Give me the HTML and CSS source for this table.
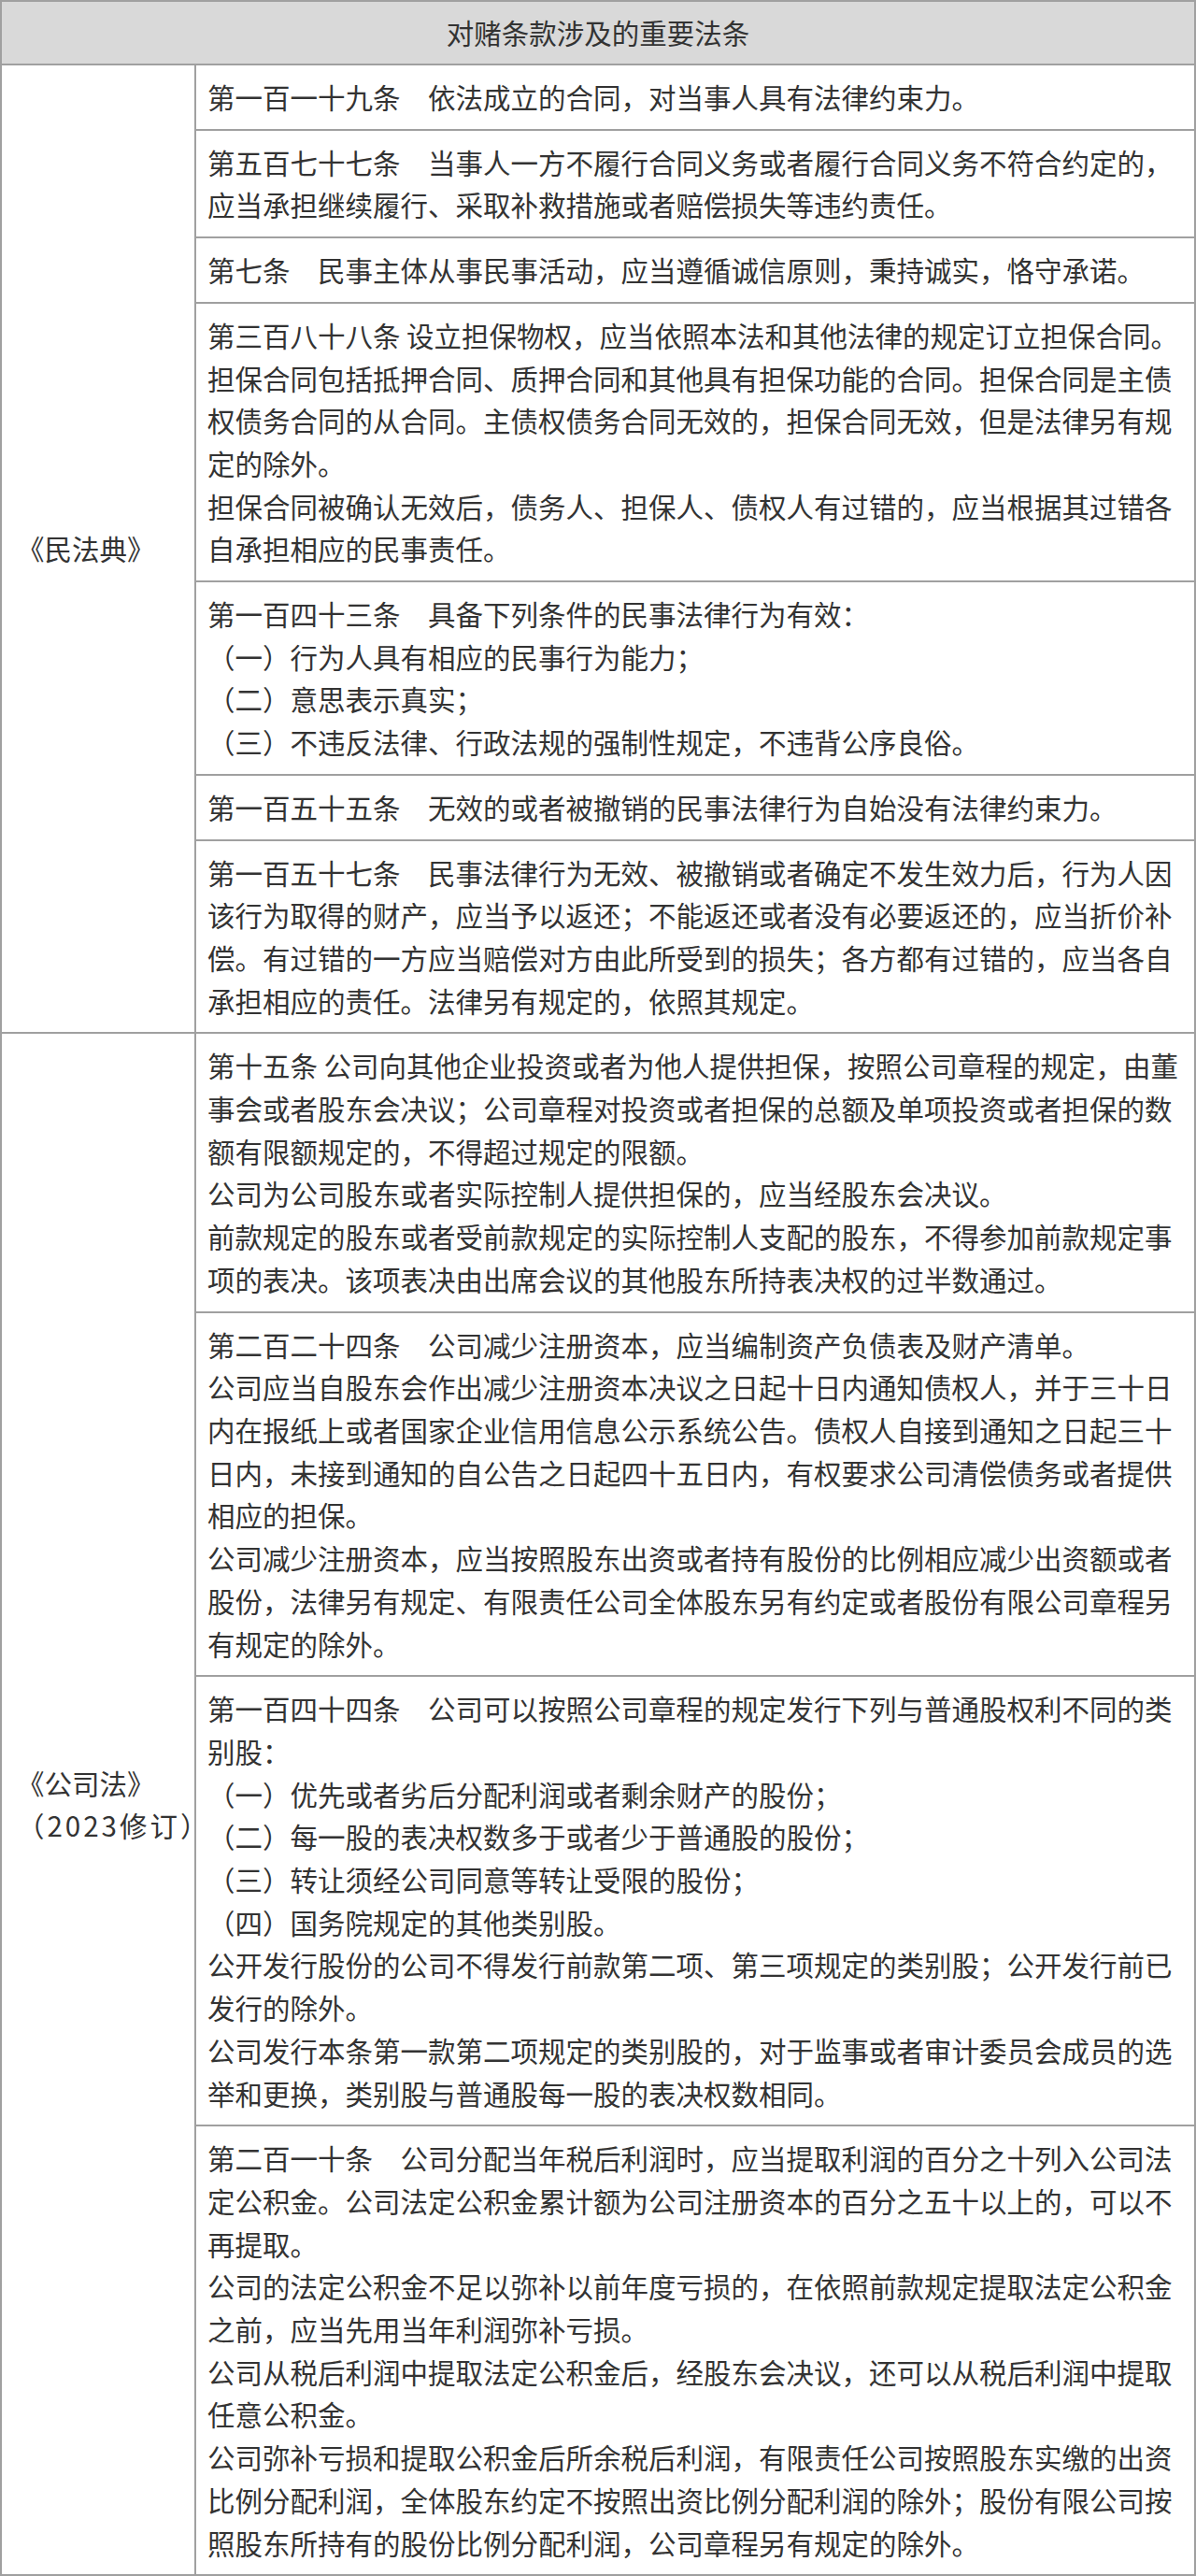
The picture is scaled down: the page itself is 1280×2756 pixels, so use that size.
FILE: index.html
```html
<!DOCTYPE html>
<html lang="zh-CN">
<head>
<meta charset="utf-8">
<title>对赌条款涉及的重要法条</title>
<link rel="stylesheet" href="styles.css">
</head>
<body>
<table class="law-table">
  <colgroup>
    <col class="col-law">
    <col class="col-text">
  </colgroup>
  <thead>
    <tr><th colspan="2" class="head">对赌条款涉及的重要法条</th></tr>
  </thead>
  <tbody>
    <tr>
      <td rowspan="7" class="law">《民法典》</td>
      <td class="text"><p>第一百一十九条　依法成立的合同，对当事人具有法律约束力。</p></td>
    </tr>
    <tr>
      <td class="text"><p>第五百七十七条　当事人一方不履行合同义务或者履行合同义务不符合约定的，应当承担继续履行、采取补救措施或者赔偿损失等违约责任。</p></td>
    </tr>
    <tr>
      <td class="text"><p>第七条　民事主体从事民事活动，应当遵循诚信原则，秉持诚实，恪守承诺。</p></td>
    </tr>
    <tr>
      <td class="text">
        <p>第三百八十八条 设立担保物权，应当依照本法和其他法律的规定订立担保合同。担保合同包括抵押合同、质押合同和其他具有担保功能的合同。担保合同是主债权债务合同的从合同。主债权债务合同无效的，担保合同无效，但是法律另有规定的除外。</p>
        <p>担保合同被确认无效后，债务人、担保人、债权人有过错的，应当根据其过错各自承担相应的民事责任。</p>
      </td>
    </tr>
    <tr>
      <td class="text">
        <p>第一百四十三条　具备下列条件的民事法律行为有效：</p>
        <p>（一）行为人具有相应的民事行为能力；</p>
        <p>（二）意思表示真实；</p>
        <p>（三）不违反法律、行政法规的强制性规定，不违背公序良俗。</p>
      </td>
    </tr>
    <tr>
      <td class="text"><p>第一百五十五条　无效的或者被撤销的民事法律行为自始没有法律约束力。</p></td>
    </tr>
    <tr>
      <td class="text"><p>第一百五十七条　民事法律行为无效、被撤销或者确定不发生效力后，行为人因该行为取得的财产，应当予以返还；不能返还或者没有必要返还的，应当折价补偿。有过错的一方应当赔偿对方由此所受到的损失；各方都有过错的，应当各自承担相应的责任。法律另有规定的，依照其规定。</p></td>
    </tr>
    <tr>
      <td rowspan="4" class="law"><span class="law-name">《公司法》</span><br><span class="law-rev">（2023修订）</span></td>
      <td class="text">
        <p>第十五条 公司向其他企业投资或者为他人提供担保，按照公司章程的规定，由董事会或者股东会决议；公司章程对投资或者担保的总额及单项投资或者担保的数额有限额规定的，不得超过规定的限额。</p>
        <p>公司为公司股东或者实际控制人提供担保的，应当经股东会决议。</p>
        <p>前款规定的股东或者受前款规定的实际控制人支配的股东，不得参加前款规定事项的表决。该项表决由出席会议的其他股东所持表决权的过半数通过。</p>
      </td>
    </tr>
    <tr>
      <td class="text">
        <p>第二百二十四条　公司减少注册资本，应当编制资产负债表及财产清单。</p>
        <p>公司应当自股东会作出减少注册资本决议之日起十日内通知债权人，并于三十日内在报纸上或者国家企业信用信息公示系统公告。债权人自接到通知之日起三十日内，未接到通知的自公告之日起四十五日内，有权要求公司清偿债务或者提供相应的担保。</p>
        <p>公司减少注册资本，应当按照股东出资或者持有股份的比例相应减少出资额或者股份，法律另有规定、有限责任公司全体股东另有约定或者股份有限公司章程另有规定的除外。</p>
      </td>
    </tr>
    <tr>
      <td class="text">
        <p>第一百四十四条　公司可以按照公司章程的规定发行下列与普通股权利不同的类别股：</p>
        <p>（一）优先或者劣后分配利润或者剩余财产的股份；</p>
        <p>（二）每一股的表决权数多于或者少于普通股的股份；</p>
        <p>（三）转让须经公司同意等转让受限的股份；</p>
        <p>（四）国务院规定的其他类别股。</p>
        <p>公开发行股份的公司不得发行前款第二项、第三项规定的类别股；公开发行前已发行的除外。</p>
        <p>公司发行本条第一款第二项规定的类别股的，对于监事或者审计委员会成员的选举和更换，类别股与普通股每一股的表决权数相同。</p>
      </td>
    </tr>
    <tr>
      <td class="text">
        <p>第二百一十条　公司分配当年税后利润时，应当提取利润的百分之十列入公司法定公积金。公司法定公积金累计额为公司注册资本的百分之五十以上的，可以不再提取。</p>
        <p>公司的法定公积金不足以弥补以前年度亏损的，在依照前款规定提取法定公积金之前，应当先用当年利润弥补亏损。</p>
        <p>公司从税后利润中提取法定公积金后，经股东会决议，还可以从税后利润中提取任意公积金。</p>
        <p>公司弥补亏损和提取公积金后所余税后利润，有限责任公司按照股东实缴的出资比例分配利润，全体股东约定不按照出资比例分配利润的除外；股份有限公司按照股东所持有的股份比例分配利润，公司章程另有规定的除外。</p>
      </td>
    </tr>
  </tbody>
</table>
</body>
</html>
```

FILE: styles.css
```css
html, body {
  margin: 0;
  padding: 0;
  background: #ffffff;
}

body {
  font-family: "Noto Sans CJK SC", "Noto Sans", sans-serif;
  font-size: 29.5px;
  line-height: 45.7px;
  color: #333333;
}

.law-table {
  width: 1280px;
  border-collapse: collapse;
  table-layout: fixed;
  border: 2px solid #a0a0a0;
}

.col-law {
  width: 208px;
}

.law-table th,
.law-table td {
  border: 2px solid #a0a0a0;
}

.law-table .head {
  background: #d9d9d9;
  font-weight: 400;
  text-align: center;
  height: 66px;
  padding: 0;
}

.law-table .law {
  vertical-align: middle;
  text-align: left;
  padding: 0 0 0 16px;
  white-space: nowrap;
  overflow: visible;
}

.law-rev {
  letter-spacing: 3px;
}

.law-table .text {
  vertical-align: top;
  padding: 11px 12px 11px 12px;
}

.text p {
  margin: 0;
}
```
